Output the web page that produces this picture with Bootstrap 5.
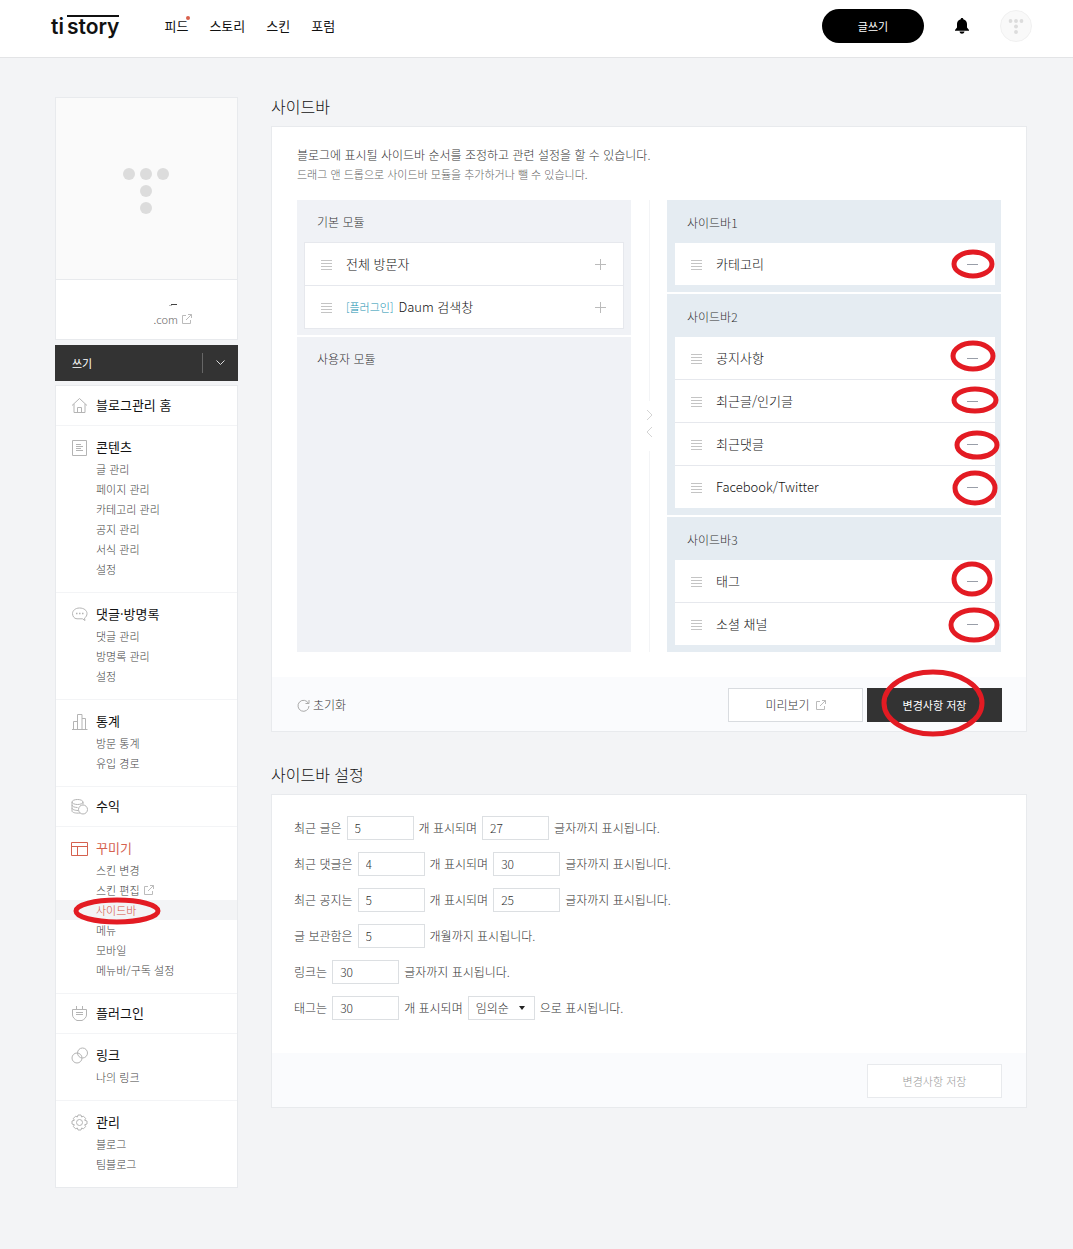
<!DOCTYPE html>
<html lang="ko">
<head>
<meta charset="utf-8">
<meta name="viewport" content="width=device-width, initial-scale=1">
<title>사이드바 - TISTORY</title>
<link href="https://cdn.jsdelivr.net/npm/bootstrap@5.3.0/dist/css/bootstrap.min.css" rel="stylesheet">
<style>
  body { background: #f3f4f6; color: #333; font-family: "Noto Sans CJK KR", "Noto Sans", sans-serif; font-size: 12px; line-height: 18px; font-weight: 300; }
  a { color: inherit; text-decoration: none; }
  svg { display: block; flex-shrink: 0; }
  .line-icon { fill: none; stroke: #b4b4b4; stroke-width: 1; }

  .topbar { height: 58px; padding: 0 41px 5px 51px; background: #fff; border-bottom: 1px solid #e3e4e6; }
  .brand { font: 600 21px/20px Inter, sans-serif; color: #111; gap: 3px; }
  .brand-bar { border-top: 2px solid #111; }
  .brand-ti { border-top: 2px solid transparent; }
  .topnav { margin-left: 45px; gap: 21px; font-size: 13px; font-weight: 400; color: #111; }
  .dot { width: 4px; height: 4px; top: -1px; right: -2px; background: #d9604c; }
  .btn-write { width: 102px; height: 34px; background: #000; color: #fff; font-size: 11px; border: 0; border-radius: 17px; }
  .btn-plain { background: none; border: 0; padding: 0; }
  .bell { margin: 0 23px; }

  .page { padding: 39px 46px 61px 55px; gap: 33px; }
  .side { width: 183px; flex-shrink: 0; }
  .boxed { background: #fff; border: 1px solid #e8eaed; }
  .blog-pic { height: 182px; background: #fafafa; border-bottom: 1px solid #e8eaed; padding: 4px 2px 0 0; }
  .blog-info { height: 59px; padding: 12px 45px 0 0; color: #666; font-size: 11px; }
  .write { height: 36px; margin: 5px 0 4px; background: #333; color: #fff; }
  .write .label-btn { color: #fff; font-size: 11px; font-weight: 400; padding-left: 17px; }
  .write .more-btn { width: 36px; height: 20px; border-left: 1px solid #666; }

  .group { padding: 12px 0 13px; border-bottom: 1px solid #f3f4f6; }
  .group:last-child { border-bottom: 0; }
  .group.single { padding: 10px 0 11px; }
  .group-head { padding-left: 15px; gap: 8px; font-size: 13px; color: #111; font-weight: 400; }
  .subs { margin: 3px 0 0; padding: 0; list-style: none; font-size: 11px; line-height: 20px; color: #444; }
  .subs a { padding-left: 40px; gap: 4px; }
  .accent { color: #d5614f; }
  .accent .line-icon { stroke: currentColor; }
  .subs .current { background: #f3f4f6; color: #d5513f; }
  .ring { fill: none; stroke: #e31b23; stroke-width: 5; pointer-events: none; overflow: visible; }
  .menu-ring { left: 18px; top: -2px; }
  .save-ring { left: 14px; top: -19px; }
  .list-ring { right: 0; top: 0; }

  .title { font-size: 16px; line-height: 18px; color: #111; font-weight: 300; margin: 0 0 11px; }
  .panel { padding: 19px 25px 25px; }
  .foot { height: 54px; padding: 2px 24px 0 25px; background: #fafbfd; gap: 4px; }
  .first-card { margin-bottom: 33px; }
  .hint { font-size: 11px; line-height: 20px; color: #666; margin-bottom: 16px; }
  .half { flex: 1 1 0; gap: 2px; }
  .mod { background: #f0f2f6; padding: 0 7px 6px; }
  .mod-name { font-size: 12px; font-weight: 300; line-height: 18px; padding: 13px 0 11px 13px; margin: 0; color: #333; }
  .mod-list { border: 1px solid #e6e8ed; background: #fff; margin: 0; padding: 0; list-style: none; }
  .mod-list li { height: 42px; padding: 0 17px 0 16px; gap: 14px; font-size: 13px; color: #111; }
  .mod-list li + li { height: 43px; border-top: 1px solid #e6e8ed; }
  .mod.blue { background: #e5ecf2; padding: 0 6px 7px 8px; }
  .blue .mod-name { padding: 14px 0 11px 12px; }
  .blue .mod-list { border: 0; }
  .plug { font-size: 11px; color: #1590b0; margin-right: 5px; }
  .gutter { width: 36px; }
  .gutter i { width: 1px; flex: 1; background: #f3f4f6; }
  .act { height: 34px; width: 135px; border: 1px solid #d9dce0; border-radius: 0; background: #fff; color: #333; font-size: 12px; font-weight: 300; padding: 0; gap: 6px; }
  .act.dark { background: #333; border-color: #333; color: #fff; font-weight: 400; font-size: 11px; }
  .act.off { border-color: #e8eaed; color: #999; font-size: 11px; }
  .reset { font-size: 12px; color: #333; font-weight: 300; gap: 3px; }

  .settings { padding: 21px 22px 33px; gap: 12px; }
  .setting { gap: 5px; color: #333; }
  .setting .form-control, .setting .form-select { width: 67px; height: 24px; min-height: 0; border: 1px solid #dcdfe2; border-radius: 0; font-size: 12px; line-height: 18px; font-weight: 300; color: #333; padding: 0 7px 1px; }
  .setting .form-select { background: #fff url("data:image/svg+xml,%3Csvg xmlns='http://www.w3.org/2000/svg' viewBox='0 0 6 4'%3E%3Cpath d='M0 0h6L3 4z' fill='%23222'/%3E%3C/svg%3E") no-repeat right 9px center / 6px 4px; }
</style>
</head>
<body>
<svg width="0" height="0" class="position-absolute" aria-hidden="true">
  <defs>
    <symbol id="grip" viewBox="0 0 11 11"><path d="M0 1.500h11M0 4.500h11M0 7.500h11M0 10.500h11" fill="none" stroke="#c4c4c4"/></symbol>
    <symbol id="plus" viewBox="0 0 11 11"><path d="M0 5.500h11M5.500 0v11" fill="none" stroke="#bbb"/></symbol>
    <symbol id="minus" viewBox="0 0 11 11"><path d="M0 5.500h11" fill="none" stroke="#999ea8"/></symbol>
    <symbol id="ext" viewBox="0 0 10 10"><path d="M4 1.500H.5v8h8V6M6 .5h3.500V4M9.500.5L4 6" fill="none" stroke="#bbb"/></symbol>
    <symbol id="tdots" viewBox="0 0 46 46"><circle cx="6" cy="6" r="6"/><circle cx="23" cy="6" r="6"/><circle cx="40" cy="6" r="6"/><circle cx="23" cy="23" r="6"/><circle cx="23" cy="40" r="6"/></symbol>
  </defs>
</svg>

<header class="topbar d-flex align-items-center">
  <a href="#" class="brand d-flex"><span class="brand-ti">ti</span><span class="brand-bar">story</span></a>
  <nav class="topnav d-flex">
    <a href="#" class="position-relative">피드<span class="dot position-absolute rounded-circle"></span></a>
    <a href="#">스토리</a><a href="#">스킨</a><a href="#">포럼</a>
  </nav>
  <button type="button" class="btn-write ms-auto">글쓰기</button>
  <button type="button" class="btn-plain bell px-2" aria-label="알림"><svg width="14" height="16" viewBox="0 0 14 16"><path d="M7 0c.8 0 1.300.5 1.300 1.200C10.700 1.800 12 3.800 12 6v3.500l2 2.500v.8H0V12l2-2.500V6c0-2.200 1.300-4.200 3.700-4.800C5.700.5 6.200 0 7 0zM4.500 13.500h5C9.200 15 8.200 15.700 7 15.700S4.800 15 4.500 13.500z"/></svg></button>
  <a href="#" aria-label="내 프로필"><svg width="32" height="32" viewBox="0 0 32 32"><circle cx="16" cy="16" r="15.500" fill="#f9f9f9" stroke="#f0f0f0"/><use href="#tdots" x="8.500" y="9" width="15" height="15" fill="#dcdcdc"/></svg></a>
</header>

<div class="page d-flex align-items-start">
  <aside class="side">
    <div class="boxed">
      <div class="blog-pic d-flex align-items-center justify-content-center"><svg width="46" height="46" fill="#dcdcdc"><use href="#tdots"/></svg></div>
      <div class="blog-info d-flex flex-column align-items-end">
        <svg width="23" height="18" viewBox="0 0 23 18"><path d="M0 13.500h3" stroke="#bbb"/><path d="M2 12.500h6" stroke="#444"/></svg>
        <a href="#" class="d-flex align-items-center gap-1">.com <svg width="10" height="10"><use href="#ext"/></svg></a>
      </div>
    </div>
    <div class="write d-flex align-items-center">
      <button type="button" class="btn-plain label-btn flex-grow-1 text-start">쓰기</button>
      <button type="button" class="btn-plain more-btn d-flex align-items-center justify-content-center" aria-label="더보기"><svg width="9" height="6" viewBox="0 0 9 6"><path d="M.5.5l4 4 4-4" fill="none" stroke="#ddd"/></svg></button>
    </div>
    <nav class="boxed">
      <div class="group single">
        <a href="#" class="group-head d-flex align-items-center"><svg class="line-icon" width="17" height="17" viewBox="0 0 17 17"><path d="M1 8.500L8.500 1.500 16 8.500M3 7v8.500h11V7M6.500 15.500v-5h4v5"/></svg>블로그관리 홈</a>
      </div>
      <div class="group">
        <a href="#" class="group-head d-flex align-items-center"><svg class="line-icon" width="17" height="17" viewBox="0 0 17 17"><path d="M1.500 1.500h14v15h-14zM5 5.500h5M5 7.500h7M5 9.500h5M5 11.500h7"/></svg>콘텐츠</a>
        <ul class="subs"><li><a href="#" class="d-flex">글 관리</a></li><li><a href="#" class="d-flex">페이지 관리</a></li><li><a href="#" class="d-flex">카테고리 관리</a></li><li><a href="#" class="d-flex">공지 관리</a></li><li><a href="#" class="d-flex">서식 관리</a></li><li><a href="#" class="d-flex">설정</a></li></ul>
      </div>
      <div class="group">
        <a href="#" class="group-head d-flex align-items-center"><svg class="line-icon" width="17" height="17" viewBox="0 0 17 17"><path d="M11.500 12.800H6C3 12.800 1.500 10 1.500 7.500S4 2 8.500 2 16 4.500 16 7.500c0 2-1 3.700-2.500 4.600l.5 2.400z"/><path d="M5 7.500h1.500M8 7.500h1.500M11 7.500h1.500" stroke-width="1.500"/></svg>댓글·방명록</a>
        <ul class="subs"><li><a href="#" class="d-flex">댓글 관리</a></li><li><a href="#" class="d-flex">방명록 관리</a></li><li><a href="#" class="d-flex">설정</a></li></ul>
      </div>
      <div class="group">
        <a href="#" class="group-head d-flex align-items-center"><svg class="line-icon" width="17" height="17" viewBox="0 0 17 17"><path d="M1 16.500h15.500M2.500 16.500v-8h4M6.500 16.500v-15h4.500v15M11 5.500h3.500v11"/></svg>통계</a>
        <ul class="subs"><li><a href="#" class="d-flex">방문 통계</a></li><li><a href="#" class="d-flex">유입 경로</a></li></ul>
      </div>
      <div class="group single">
        <a href="#" class="group-head d-flex align-items-center"><svg class="line-icon" width="17" height="17" viewBox="0 0 17 17"><ellipse cx="6.500" cy="4" rx="5.500" ry="2.500"/><path d="M1 4v3c0 1.400 2.500 2.500 5.500 2.500M12 4v2.500M1 7v3c0 1.400 3 2.500 6 2.500M1 10v3c0 1.400 3.500 2.500 8 2"/><circle cx="12" cy="11.500" r="4.500"/></svg>수익</a>
      </div>
      <div class="group">
        <a href="#" class="group-head accent d-flex align-items-center"><svg class="line-icon" width="17" height="17" viewBox="0 0 17 17"><path d="M.5 2.500h16v13H.5zM.5 6.500h16M6.500 6.500v9"/></svg>꾸미기</a>
        <ul class="subs"><li><a href="#" class="d-flex">스킨 변경</a></li><li><a href="#" class="d-flex align-items-center">스킨 편집<svg width="10" height="10"><use href="#ext"/></svg></a></li><li class="position-relative"><a href="#" class="current d-flex" aria-current="page">사이드바</a><svg class="ring menu-ring position-absolute" width="86" height="26"><ellipse cx="43" cy="13" rx="41" ry="11"/></svg></li><li><a href="#" class="d-flex">메뉴</a></li><li><a href="#" class="d-flex">모바일</a></li><li><a href="#" class="d-flex">메뉴바/구독 설정</a></li></ul>
      </div>
      <div class="group single">
        <a href="#" class="group-head d-flex align-items-center"><svg class="line-icon" width="17" height="17" viewBox="0 0 17 17"><path d="M1.500 4.500h14v5.500c0 2.500-2.500 4.500-4.500 5.500H6c-2-1-4.500-3-4.500-5.500zM5.500 1v3.500M11.500 1v3.500M5 7.500h7M5 9.500h7"/></svg>플러그인</a>
      </div>
      <div class="group">
        <a href="#" class="group-head d-flex align-items-center"><svg class="line-icon" width="17" height="17" viewBox="0 0 17 17"><circle cx="6" cy="11" r="5"/><circle cx="11.500" cy="6" r="5"/></svg>링크</a>
        <ul class="subs"><li><a href="#" class="d-flex">나의 링크</a></li></ul>
      </div>
      <div class="group">
        <a href="#" class="group-head d-flex align-items-center"><svg class="line-icon" width="17" height="17" viewBox="0 0 17 17"><circle cx="8.500" cy="8.500" r="3"/><path d="M7 1h3l.6 2 1.800-.8 2.200 2.200-.9 1.900 2.300.7v3l-2.300.7.900 1.900-2.200 2.200-1.800-.8L10 16H7l-.6-2-1.800.8-2.200-2.200.9-1.900L1 10V7l2.300-.7-.9-1.900 2.200-2.200 1.800.8z"/></svg>관리</a>
        <ul class="subs"><li><a href="#" class="d-flex">블로그</a></li><li><a href="#" class="d-flex">팀블로그</a></li></ul>
      </div>
    </nav>
  </aside>

  <main class="flex-grow-1">
    <h1 class="title">사이드바</h1>
    <section class="boxed first-card">
      <div class="panel">
        <p class="mb-0">블로그에 표시될 사이드바 순서를 조정하고 관련 설정을 할 수 있습니다.</p>
        <p class="hint">드래그 앤 드롭으로 사이드바 모듈을 추가하거나 뺄 수 있습니다.</p>
        <div class="d-flex">
          <div class="half d-flex flex-column">
            <div class="mod">
              <h2 class="mod-name">기본 모듈</h2>
              <ul class="mod-list">
                <li class="d-flex align-items-center"><svg width="11" height="11"><use href="#grip"/></svg><span>전체 방문자</span><button type="button" class="btn-plain ms-auto" aria-label="추가"><svg width="11" height="11"><use href="#plus"/></svg></button></li>
                <li class="d-flex align-items-center"><svg width="11" height="11"><use href="#grip"/></svg><span><span class="plug">[플러그인]</span>Daum 검색창</span><button type="button" class="btn-plain ms-auto" aria-label="추가"><svg width="11" height="11"><use href="#plus"/></svg></button></li>
              </ul>
            </div>
            <div class="mod flex-grow-1"><h2 class="mod-name">사용자 모듈</h2></div>
          </div>
          <div class="gutter d-flex flex-column align-items-center">
            <i></i>
            <svg width="7" height="50" viewBox="0 0 7 50"><path d="M1 9l5 5-5 5M6 26l-5 5 5 5" fill="none" stroke="#d4d4d4"/></svg>
            <i></i>
          </div>
          <div class="half d-flex flex-column position-relative">
            <div class="mod blue">
              <h2 class="mod-name">사이드바1</h2>
              <ul class="mod-list">
                <li class="d-flex align-items-center"><svg width="11" height="11"><use href="#grip"/></svg><span>카테고리</span><button type="button" class="btn-plain ms-auto" aria-label="제거"><svg width="11" height="11"><use href="#minus"/></svg></button></li>
              </ul>
            </div>
            <div class="mod blue">
              <h2 class="mod-name">사이드바2</h2>
              <ul class="mod-list">
                <li class="d-flex align-items-center"><svg width="11" height="11"><use href="#grip"/></svg><span>공지사항</span><button type="button" class="btn-plain ms-auto" aria-label="제거"><svg width="11" height="11"><use href="#minus"/></svg></button></li>
                <li class="d-flex align-items-center"><svg width="11" height="11"><use href="#grip"/></svg><span>최근글/인기글</span><button type="button" class="btn-plain ms-auto" aria-label="제거"><svg width="11" height="11"><use href="#minus"/></svg></button></li>
                <li class="d-flex align-items-center"><svg width="11" height="11"><use href="#grip"/></svg><span>최근댓글</span><button type="button" class="btn-plain ms-auto" aria-label="제거"><svg width="11" height="11"><use href="#minus"/></svg></button></li>
                <li class="d-flex align-items-center"><svg width="11" height="11"><use href="#grip"/></svg><span>Facebook/Twitter</span><button type="button" class="btn-plain ms-auto" aria-label="제거"><svg width="11" height="11"><use href="#minus"/></svg></button></li>
              </ul>
            </div>
            <div class="mod blue">
              <h2 class="mod-name">사이드바3</h2>
              <ul class="mod-list">
                <li class="d-flex align-items-center"><svg width="11" height="11"><use href="#grip"/></svg><span>태그</span><button type="button" class="btn-plain ms-auto" aria-label="제거"><svg width="11" height="11"><use href="#minus"/></svg></button></li>
                <li class="d-flex align-items-center"><svg width="11" height="11"><use href="#grip"/></svg><span>소셜 채널</span><button type="button" class="btn-plain ms-auto" aria-label="제거"><svg width="11" height="11"><use href="#minus"/></svg></button></li>
              </ul>
            </div>
            <svg class="ring list-ring position-absolute" width="54" height="452">
              <ellipse cx="26" cy="64" rx="19" ry="12"/><ellipse cx="26" cy="156" rx="20" ry="13"/><ellipse cx="28" cy="200" rx="21" ry="11"/><ellipse cx="30" cy="245" rx="20" ry="12"/><ellipse cx="28" cy="288" rx="20" ry="15"/><ellipse cx="25" cy="379" rx="18" ry="15"/><ellipse cx="27" cy="425" rx="23" ry="15"/>
            </svg>
          </div>
        </div>
      </div>
      <div class="foot d-flex align-items-center">
        <button type="button" class="btn-plain reset me-auto d-flex align-items-center"><svg width="13" height="13" viewBox="0 0 13 13"><path d="M11.500 4.500A5.500 5.500 0 1 0 12 7M12 1v3.500H8.500" fill="none" stroke="#aaa"/></svg>초기화</button>
        <button type="button" class="btn act d-flex align-items-center justify-content-center">미리보기 <svg width="10" height="10"><use href="#ext"/></svg></button>
        <div class="position-relative"><button type="button" class="btn act dark">변경사항 저장</button><svg class="ring save-ring position-absolute" width="104" height="68"><ellipse cx="52" cy="34" rx="49" ry="31"/></svg></div>
      </div>
    </section>

    <h1 class="title">사이드바 설정</h1>
    <section class="boxed">
      <form>
        <div class="settings d-flex flex-column">
          <div class="setting d-flex align-items-center"><label for="p1">최근 글은</label><input id="p1" class="form-control" value="5"><label for="p2">개 표시되며</label><input id="p2" class="form-control" value="27"><span>글자까지 표시됩니다.</span></div>
          <div class="setting d-flex align-items-center"><label for="c1">최근 댓글은</label><input id="c1" class="form-control" value="4"><label for="c2">개 표시되며</label><input id="c2" class="form-control" value="30"><span>글자까지 표시됩니다.</span></div>
          <div class="setting d-flex align-items-center"><label for="n1">최근 공지는</label><input id="n1" class="form-control" value="5"><label for="n2">개 표시되며</label><input id="n2" class="form-control" value="25"><span>글자까지 표시됩니다.</span></div>
          <div class="setting d-flex align-items-center"><label for="a1">글 보관함은</label><input id="a1" class="form-control" value="5"><span>개월까지 표시됩니다.</span></div>
          <div class="setting d-flex align-items-center"><label for="l1">링크는</label><input id="l1" class="form-control" value="30"><span>글자까지 표시됩니다.</span></div>
          <div class="setting d-flex align-items-center"><label for="t1">태그는</label><input id="t1" class="form-control" value="30"><label for="t2">개 표시되며</label><select id="t2" class="form-select"><option>임의순</option></select><span>으로 표시됩니다.</span></div>
        </div>
        <div class="foot d-flex align-items-center justify-content-end"><button type="button" class="btn act off">변경사항 저장</button></div>
      </form>
    </section>
  </main>
</div>
<script src="https://cdn.jsdelivr.net/npm/bootstrap@5.3.0/dist/js/bootstrap.bundle.min.js"></script>
</body>
</html>
